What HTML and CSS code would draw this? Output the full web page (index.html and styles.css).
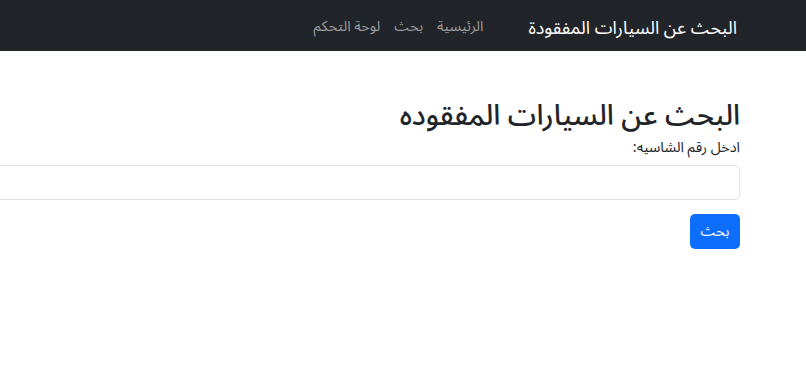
FILE: index.html
```html
<!DOCTYPE html>
<html lang="ar" dir="rtl">
<head>
<meta charset="utf-8">
<title>البحث عن السيارات المفقودة</title>
<link rel="stylesheet" href="styles.css">
</head>
<body>
<nav class="navbar">
  <a class="brand" href="#">البحث عن السيارات المفقودة</a>
  <ul class="nav-links">
    <li><a href="#">الرئيسية</a></li>
    <li><a href="#">بحث</a></li>
    <li><a href="#">لوحة التحكم</a></li>
  </ul>
</nav>
<main class="page">
  <h2 class="title">البحث عن السيارات المفقوده</h2>
  <form class="search-form">
    <label class="label" for="chassis">ادخل رقم الشاسيه:</label>
    <input class="field" id="chassis" type="text">
    <button class="btn" type="button">بحث</button>
  </form>
</main>
</body>
</html>
```

FILE: styles.css
```css
* { box-sizing: border-box; }
html, body {
  margin: 0;
  padding: 0;
  background: #fff;
  font-family: "Noto Sans Arabic", "DejaVu Sans", sans-serif;
  color: #212529;
  overflow: hidden;
}
.navbar {
  height: 51px;
  background: #212529;
  display: flex;
  align-items: center;
  padding-right: 69px;
}
.brand {
  color: #fff;
  text-decoration: none;
  font-size: 18px;
  line-height: 1.5;
  margin-top: 5px;
}
.nav-links {
  list-style: none;
  margin: 0 45px 0 0;
  padding: 0;
  display: flex;
  gap: 14px;
}
.nav-links a {
  color: #9a9b9d;
  text-decoration: none;
  font-size: 14.4px;
  line-height: 1.5;
}
.page {
  padding: 48px 66px 0 0;
}
.title {
  margin: 0 0 4px;
  font-size: 28.6px;
  font-weight: 500;
  line-height: 1.2;
}
.search-form {
  display: flex;
  flex-direction: column;
  align-items: flex-start;
}
.label {
  font-size: 14.4px;
  line-height: 1.5;
  margin-bottom: 6px;
}
.field {
  width: 100%;
  height: 35px;
  border: 1px solid #dee2e6;
  border-left: none;
  border-radius: 0 5px 5px 0;
  font-size: 14.4px;
  padding: 0 10px;
}
.btn {
  margin-top: 14px;
  width: 50px;
  height: 35px;
  background: #0d6efd;
  color: #fff;
  border: none;
  border-radius: 5px;
  font-family: inherit;
  font-size: 14.4px;
}
```
